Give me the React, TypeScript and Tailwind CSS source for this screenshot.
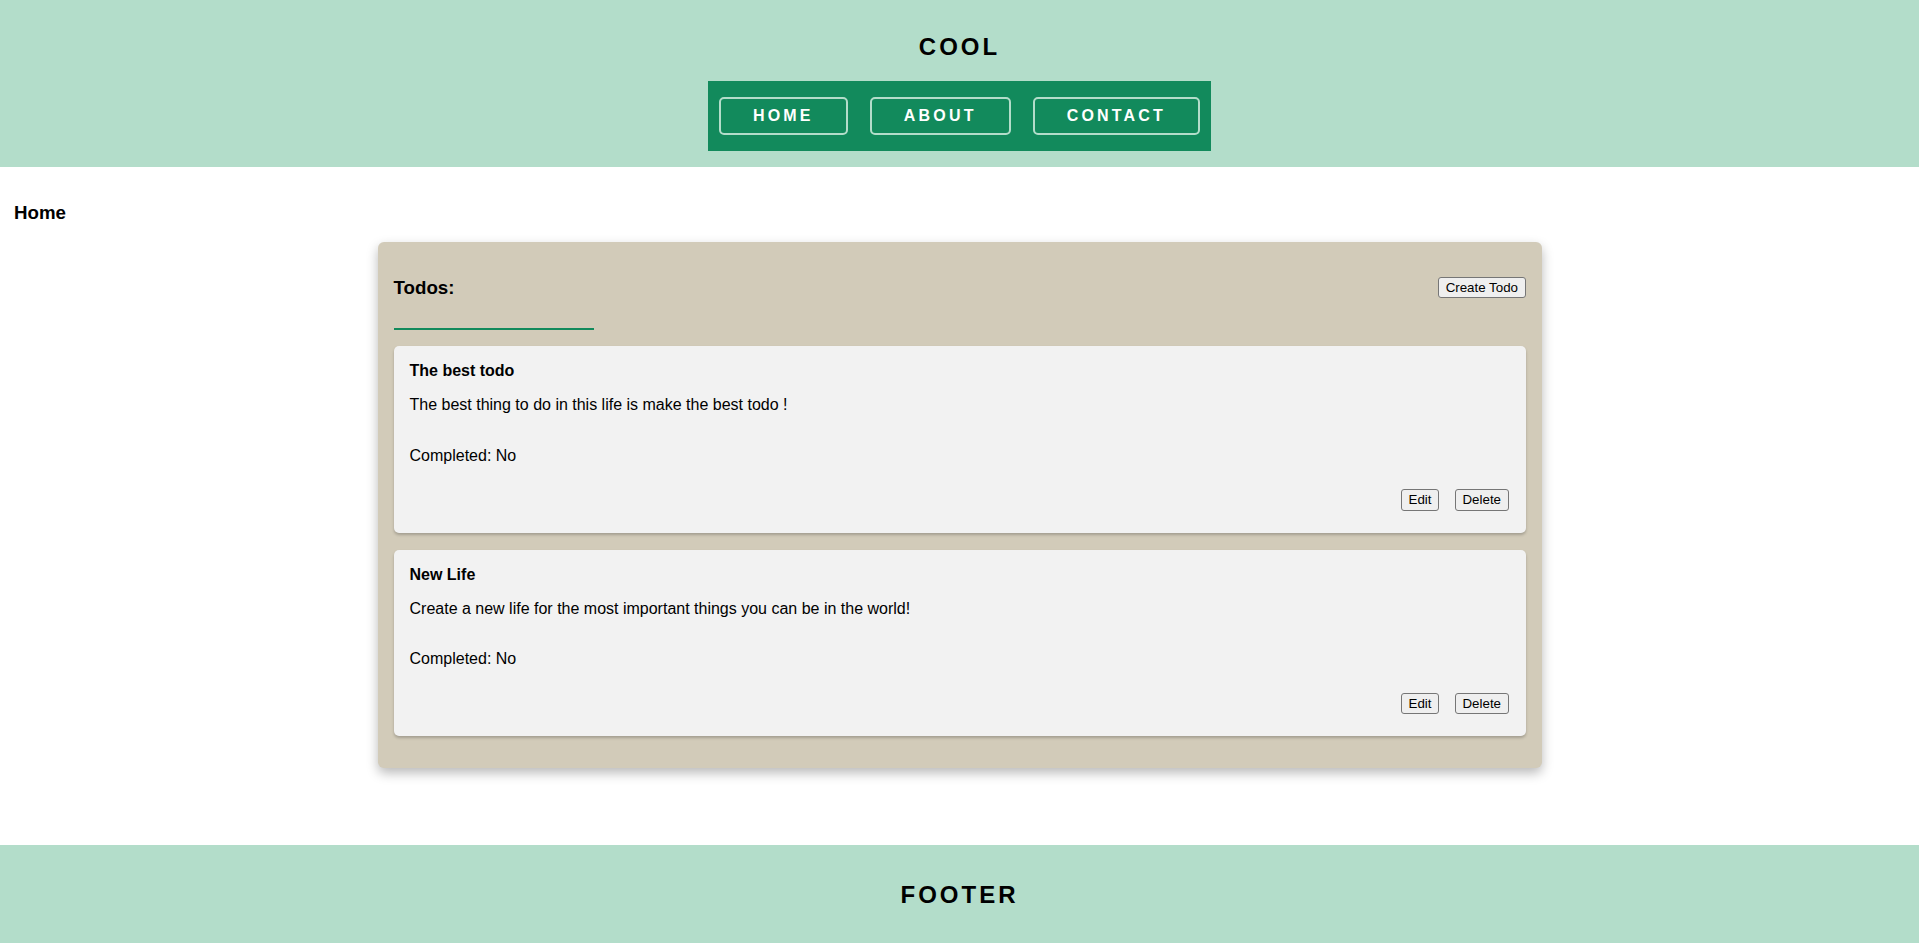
import React from 'react';

interface Todo {
  id: number;
  title: string;
  description: string;
  completed: boolean;
}

const todos: Todo[] = [
  {
    id: 1,
    title: 'The best todo',
    description: 'The best thing to do in this life is make the best todo !',
    completed: false,
  },
  {
    id: 2,
    title: 'New Life',
    description: 'Create a new life for the most important things you can be in the world!',
    completed: false,
  },
];

const navItems = ['Home', 'About', 'Contact'];

const NativeButton: React.FC<{ children: React.ReactNode }> = ({ children }) => (
  <button className="bg-[#efefef] border border-[#767676] rounded-[3px] px-[6.5px] py-[2px] text-[13.333px] leading-[15.3px] text-black hover:bg-[#e5e5e5]">
    {children}
  </button>
);

const TodoCard: React.FC<{ todo: Todo }> = ({ todo }) => (
  <div className="bg-[#f2f2f2] rounded-[5px] shadow-[0_2px_3px_rgba(0,0,0,0.22)] pl-4 pr-[17px] pt-4 pb-[22px] text-black">
    <h4 className="text-base font-bold leading-[18.4px]">{todo.title}</h4>
    <p className="mt-4 text-base leading-[18.4px]">{todo.description}</p>
    <p className="mt-8 text-base leading-[18.4px]">Completed: {todo.completed ? 'Yes' : 'No'}</p>
    <div className="mt-6 flex justify-end gap-4">
      <NativeButton>Edit</NativeButton>
      <NativeButton>Delete</NativeButton>
    </div>
  </div>
);

export default function App() {
  return (
    <div className="min-h-screen flex flex-col bg-white font-['Liberation_Sans',Arial,sans-serif]">
      {/* Header */}
      <header className="bg-[#b3ddca] pt-[33px] pb-4 flex flex-col items-center">
        <h1 className="text-2xl font-bold tracking-[3px] leading-[27.6px] text-black">COOL</h1>
        <nav className="mt-5 bg-[#128a5c] flex gap-[22px] px-[11px] py-4">
          {navItems.map((item) => (
            <a
              key={item}
              href="#"
              className="block border-2 border-[#b3ddca] rounded-[5px] px-8 py-2 text-base font-bold uppercase tracking-[0.2em] leading-[18.4px] text-white"
            >
              {item}
            </a>
          ))}
        </nav>
      </header>

      {/* Main */}
      <main className="flex-1 pt-[35px] pb-[77px]">
        <h3 className="pl-[14px] text-[18.72px] font-bold leading-[21.5px] text-black">Home</h3>

        <div className="mx-auto mt-[18px] w-[1164px] bg-[#d2cbb9] rounded-[6px] shadow-[0_5px_12px_rgba(0,0,0,0.28)] px-4 pt-[35px] pb-8">
          <div className="flex items-center justify-between h-[21.5px]">
            <h3 className="text-[18.72px] font-bold leading-[21.5px] text-black">Todos:</h3>
            <NativeButton>Create Todo</NativeButton>
          </div>
          <div className="mt-[30px] h-[2px] w-[200px] bg-[#128a5c]" />

          <div className="mt-4 flex flex-col gap-[17px]">
            {todos.map((todo) => (
              <TodoCard key={todo.id} todo={todo} />
            ))}
          </div>
        </div>
      </main>

      {/* Footer */}
      <footer className="bg-[#b3ddca] py-[36px] flex justify-center">
        <h2 className="text-2xl font-bold tracking-[3px] leading-[27.6px] text-black">FOOTER</h2>
      </footer>
    </div>
  );
}
